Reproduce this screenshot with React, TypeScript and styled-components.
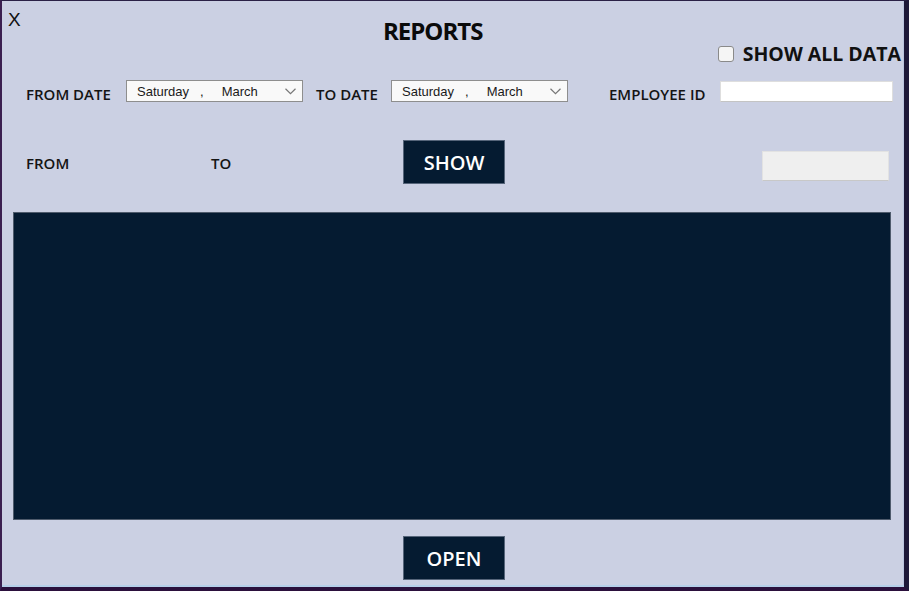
import React, { FC } from "react";
import styled, { createGlobalStyle } from "styled-components";

const GlobalStyle = createGlobalStyle`
    html, body {
        margin: 0;
        padding: 0;
        background: #cbd0e3;
    }
    * {
        box-sizing: border-box;
    }
`;

const Window = styled.div`
    width: 909px;
    height: 591px;
    background: #cbd0e3;
    border-top: 1px solid #2a2146;
    border-left: 2px solid #3b1f50;
    border-right: 5px solid #1d1838;
    border-bottom: 4px solid #2b103c;
    box-shadow: inset 0 -2px 0 #b5cfe8, inset -1px 0 0 #b9c4de;
    display: flex;
    flex-direction: column;
    font-family: "Open Sans", "Liberation Sans", sans-serif;
    color: #111;
`;

const Header = styled.div`
    height: 79px;
    display: flex;
    align-items: flex-start;
`;

const CloseButton = styled.button`
    width: 24px;
    margin-top: 9px;
    padding: 0 0 0 6px;
    border: none;
    background: none;
    text-align: left;
    font-family: "Liberation Sans", Arial, sans-serif;
    font-size: 19px;
    line-height: 1;
    color: #111;
    cursor: pointer;
`;

const Title = styled.h1`
    margin: 18px 0 0 357px;
    font-size: 24px;
    font-weight: 700;
    line-height: 1;
    letter-spacing: -1px;
    color: #0a0a0a;
`;

const CheckRow = styled.label`
    margin: 43px 3px 0 auto;
    display: flex;
    align-items: center;
    gap: 9px;
    font-size: 19.5px;
    font-weight: 700;
    line-height: 20px;
    cursor: pointer;
    & > input {
        appearance: none;
        width: 16px;
        height: 16px;
        margin: 0;
        border: 1px solid #8a8a8a;
        border-radius: 3px;
        background: #f5f5f5;
    }
`;

const FilterRow = styled.div`
    height: 22px;
    display: flex;
    align-items: center;
    padding-left: 24px;
`;

const Label = styled.span<{ w: number; ml?: number }>`
    width: ${props => props.w}px;
    margin-left: ${props => props.ml || 0}px;
    align-self: flex-end;
    margin-bottom: 0;
    font-size: 15px;
    font-weight: 600;
    line-height: 15px;
    white-space: nowrap;
    color: #141414;
`;

const PickerBox = styled.div`
    width: 177px;
    height: 22px;
    display: flex;
    align-items: center;
    padding: 0 6px 0 10px;
    background: #f9f9f9;
    border: 1px solid #8e8e8e;
    font-family: "Liberation Sans", Arial, sans-serif;
    font-size: 13px;
    color: #1a1a1a;
`;

const Comma = styled.span`
    margin-left: 11px;
`;

const Month = styled.span`
    margin-left: 18px;
`;

const Chevron = styled.svg`
    margin-left: auto;
`;

const TextInput = styled.input`
    width: 173px;
    height: 21px;
    margin: 1px 0 0 0;
    border: 1px solid #dedede;
    border-bottom-color: #c4c4c4;
    background: #fff;
    outline: none;
`;

const ActionRow = styled.div`
    height: 44px;
    margin-top: 38px;
    display: flex;
    align-items: center;
    padding-left: 24px;
`;

const RowLabel = styled.span<{ w: number }>`
    width: ${props => props.w}px;
    padding-top: 2px;
    font-size: 15px;
    font-weight: 600;
    line-height: 15px;
    color: #141414;
`;

const DarkButton = styled.button<{ ml?: number }>`
    width: 102px;
    height: 44px;
    margin-left: ${props => props.ml || 0}px;
    padding: 0;
    background: #051b31;
    border: 1px solid #56657a;
    color: #fff;
    font-family: "Open Sans", "Liberation Sans", sans-serif;
    font-size: 20px;
    font-weight: 600;
    cursor: pointer;
`;

const GreyBox = styled.div`
    align-self: flex-start;
    margin: 11px 15px 0 auto;
    width: 127px;
    height: 30px;
    background: #efefef;
    border: 1px solid #e2e2e2;
    border-bottom-color: #c8c8c8;
`;

const DataPanel = styled.div`
    margin: 28px 0 0 11px;
    width: 878px;
    height: 308px;
    background: #051b31;
    border: 1px solid #4f5b6c;
`;

const Footer = styled.div`
    margin-top: 16px;
    display: flex;
`;

const DatePicker: FC<{ day: string; month: string }> = ({ day, month }) => {
    return (
        <PickerBox>
            <span>{day}</span>
            <Comma>,</Comma>
            <Month>{month}</Month>
            <Chevron width="11" height="7" viewBox="0 0 11 7">
                <path d="M0.5 0.8 L5.5 5.6 L10.5 0.8" fill="none" stroke="#777" strokeWidth="1.2" />
            </Chevron>
        </PickerBox>
    );
};

const App: FC = () => {
    return (
        <>
            <GlobalStyle />
            <Window>
                <Header>
                    <CloseButton>X</CloseButton>
                    <Title>REPORTS</Title>
                    <CheckRow>
                        <input type="checkbox" />
                        SHOW ALL DATA
                    </CheckRow>
                </Header>
                <FilterRow>
                    <Label w={100}>FROM DATE</Label>
                    <DatePicker day="Saturday" month="March" />
                    <Label w={75} ml={13}>TO DATE</Label>
                    <DatePicker day="Saturday" month="March" />
                    <Label w={111} ml={41}>EMPLOYEE ID</Label>
                    <TextInput />
                </FilterRow>
                <ActionRow>
                    <RowLabel w={185}>FROM</RowLabel>
                    <RowLabel w={192}>TO</RowLabel>
                    <DarkButton>SHOW</DarkButton>
                    <GreyBox />
                </ActionRow>
                <DataPanel />
                <Footer>
                    <DarkButton ml={401}>OPEN</DarkButton>
                </Footer>
            </Window>
        </>
    );
};

export default App;
